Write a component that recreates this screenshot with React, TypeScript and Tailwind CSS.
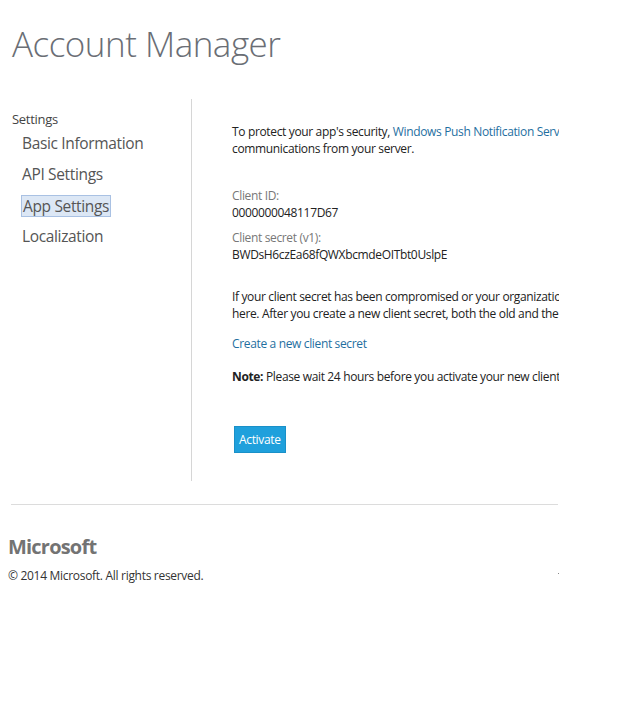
import React from "react";

const font = { fontFamily: '"Open Sans", "Noto Sans", Arial, sans-serif' };

export default function App() {
  return (
    <div className="w-[642px] h-[704px] bg-white text-[#333]" style={font}>
      <div className="pl-[12px] pt-[20px] h-[99px]">
        <h1 className="text-[35px] font-light text-[#6a6e75] leading-[48px] tracking-[-0.5px]">Account Manager</h1>
      </div>
      <div className="flex w-[559px]">
        <div className="w-[192px] h-[382px] border-r border-[#d6d6d6] pt-[12px]">
          <div className="pl-[12px] text-[13px] text-[#444] leading-[16px] tracking-[-0.3px]">Settings</div>
          <ul className="pl-[21px] mt-[1px] text-[15.5px] text-[#555] tracking-[-0.35px]">
            <li className="h-[31px] flex items-center"><span className="px-[1px]">Basic Information</span></li>
            <li className="h-[31px] flex items-center"><span className="px-[1px]">API Settings</span></li>
            <li className="h-[31px] flex items-center"><span className="px-[1px] bg-[#dce7f5] border border-[#a9c1e3] leading-[20px]">App Settings</span></li>
            <li className="h-[31px] flex items-center"><span className="px-[1px]">Localization</span></li>
          </ul>
        </div>
        <div className="flex-1 overflow-hidden pl-[40px] pt-[24px] text-[12px] leading-[17px] whitespace-nowrap tracking-[-0.35px]">
          <div className="text-[#222]">
            <div>To protect your app's security, <span className="text-[#1f6f9f]">Windows Push Notification Services (WNS) and Live Services</span></div>
            <div>communications from your server.</div>
          </div>
          <div className="mt-[30px]">
            <div className="text-[#777]">Client ID:</div>
            <div className="text-[#222]">0000000048117D67</div>
          </div>
          <div className="mt-[8px]">
            <div className="text-[#777]">Client secret (v1):</div>
            <div className="text-[#222]">BWDsH6czEa68fQWXbcmdeOITbt0UslpE</div>
          </div>
          <div className="mt-[25px] text-[#222]">
            <div>If your client secret has been compromised or your organization requires that you change it periodically, create a new one</div>
            <div>here. After you create a new client secret, both the old and the new secrets will work until you activate the new one.</div>
          </div>
          <div className="mt-[13px] text-[#1f6f9f]">Create a new client secret</div>
          <div className="mt-[16px] text-[#222]"><span className="font-bold">Note:</span> Please wait 24 hours before you activate your new client secret.</div>
          <div className="mt-[41px] pl-[2px]">
            <button className="bg-[#1fa0dc] text-white text-[12px] h-[27px] px-[4px] border border-[#1a90c8]">Activate</button>
          </div>
        </div>
      </div>
      <div className="ml-[11px] mt-[23px] w-[547px] border-t border-[#dcdcdc]" />
      <div className="pl-[8px] pt-[30px] w-[559px]">
        <div className="text-[20px] font-bold text-[#737373] leading-[24px] tracking-[-0.8px]">Microsoft</div>
        <div className="mt-[9px] flex justify-between items-center text-[12px] text-[#333] tracking-[-0.3px] leading-[16px]">
          <span>© 2014 Microsoft. All rights reserved.</span>
          <span className="w-[1px] h-[1px] bg-[#888] -mt-[6px]" />
        </div>
      </div>
    </div>
  );
}
